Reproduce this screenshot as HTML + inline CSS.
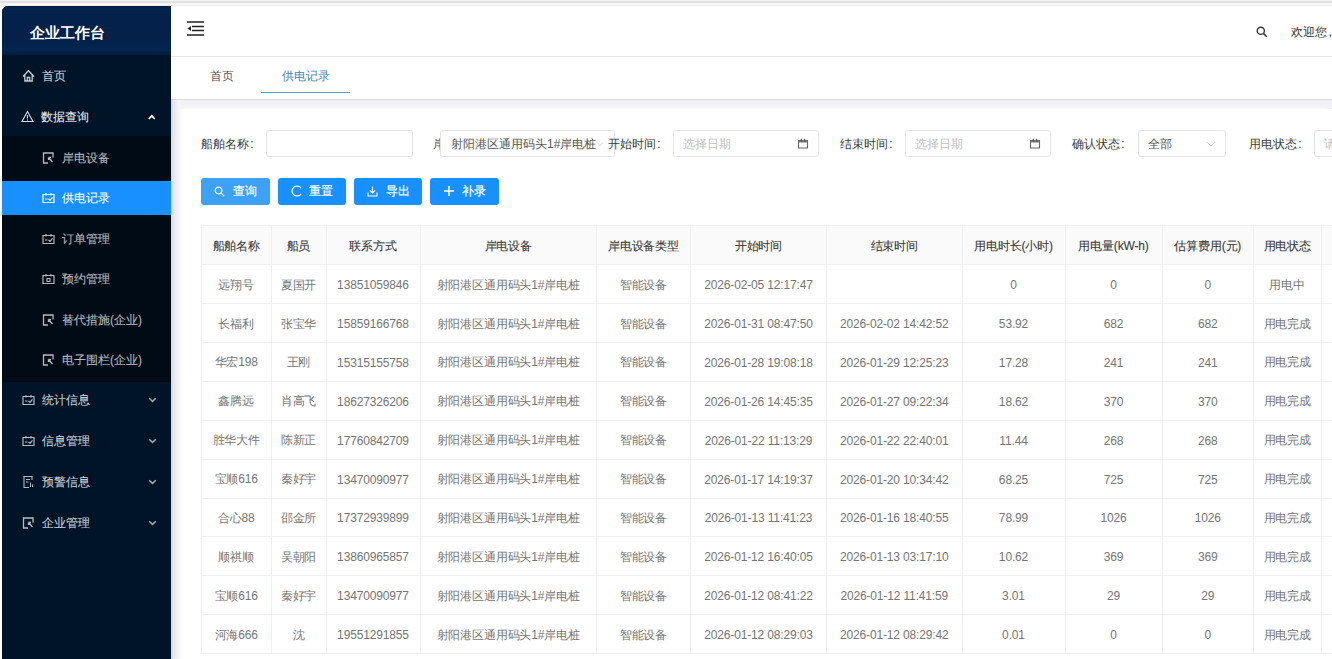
<!DOCTYPE html>
<html><head><meta charset="utf-8">
<style>
*{box-sizing:border-box;margin:0;padding:0}
html,body{width:1332px;height:659px;overflow:hidden;background:#fff;font-family:"Liberation Sans",sans-serif;font-size:12px;color:#333}
.abs{position:absolute}
#topstrip{left:0;top:0;width:1332px;height:6px;background:linear-gradient(#fafafa 0,#e2e2e2 1.5px,#e2e2e2 2.5px,#f7f7f7 3.5px,#f7f7f7 5px,#ededed 5.5px,#fff 6px)}
#side{left:2px;top:6px;width:169px;height:660px;background:#001428;border-top-left-radius:6px;overflow:hidden}
#logo{left:0;top:0;width:169px;height:49px;background:linear-gradient(#021b3a 0,#03244f 6%,#03214a 20%,#032149 70%,#042550 90%,#021c3c 100%);color:#fff;font-weight:bold;font-size:15px;line-height:18px;padding:18px 0 0 28px}
#sub{left:0;top:130px;width:169px;height:246px;background:#000b16}
.mi{position:absolute;left:0;width:169px;height:34px;line-height:34px;color:rgba(255,255,255,.75);font-size:12px;-webkit-text-stroke:0.1px currentColor}
.mi .ic{position:absolute;top:0;width:13px;height:34px}
.mi .tx{position:absolute;top:0}
.mi.act{background:#1890ff;color:#fff}
.chev{position:absolute;left:146px;top:0;width:9px;height:34px}
#hdr{left:171px;top:6px;width:1161px;height:51px;background:#fff;border-bottom:1px solid #e8e8e8}
#tabs{left:171px;top:57px;width:1161px;height:43px;background:#fff;border-bottom:1px solid #d8dadf}
#gray{left:171px;top:100px;width:1161px;height:559px;background:#f1f1f4}
#card{left:179px;top:109px;width:1153px;height:550px;background:#fff;box-shadow:-3px -2px 5px #fafafc}
.lbl{position:absolute;top:135px;height:18px;line-height:18px;color:#3a3a3a;white-space:nowrap}
.inp{position:absolute;top:130px;height:27px;border:1px solid #e4e4e6;border-radius:3px;background:#fff}
.ph{position:absolute;top:5px;line-height:16px;color:#bfbfbf;white-space:nowrap}
.btn{position:absolute;top:178px;height:27px;border-radius:3px;background:#1890ff;color:#fff}
.btn .t{position:absolute;top:0;line-height:27px;-webkit-text-stroke:0.2px currentColor}
table{position:absolute;left:201px;top:225px;width:1179px;border-collapse:collapse;table-layout:fixed}
td,th{padding-top:2px;border:1px solid #f0f0f0;letter-spacing:-0.15px;height:38.9px;text-align:center;font-weight:normal;color:#757575;white-space:nowrap;overflow:hidden}
th{background:#fafafa;color:#3c3c3c;height:39.2px;-webkit-text-stroke:0.12px currentColor}
</style></head><body>
<div id="topstrip" class="abs"></div>

<div id="side" class="abs">
  <div id="logo" class="abs">企业工作台</div>
  <div id="sub" class="abs"></div>
  <!-- items: centers 76,117,158,198,239,279.5,320,360,400.5,441,482,523 ; side top=6 -->
  <div class="mi" style="top:53px">
    <svg class="ic" style="left:20px" viewBox="0 0 13 34"><path d="M1 17.5 L6.5 11.8 L12 17.5 M2.8 16 V22 H10.2 V16 M5.3 22 V18.5 H7.7 V22" fill="none" stroke="rgba(255,255,255,.78)" stroke-width="1.3"/></svg>
    <span class="tx" style="left:40px">首页</span></div>
  <div class="mi" style="top:94px;color:rgba(255,255,255,.92)">
    <svg class="ic" style="left:19px" viewBox="0 0 13 34"><path d="M6.5 11.5 L12 21.5 H1 Z M6.5 15 V18.5 M6.5 19.6 V20.4" fill="none" stroke="rgba(255,255,255,.85)" stroke-width="1.1"/></svg>
    <span class="tx" style="left:39px">数据查询</span>
    <svg class="chev" viewBox="0 0 9 34"><path d="M0.8 19 L3.8 15.8 L6.8 19" fill="none" stroke="#fff" stroke-width="1.7"/></svg></div>
  <div class="mi" style="top:135px;color:rgba(255,255,255,.68)">
    <svg class="ic" style="left:40px" viewBox="0 0 13 34"><path d="M11 16.5 V12 H1.5 V22 H6 M6.5 16.5 L10.5 21 M6.5 16.5 H9 M6.5 16.5 V19" fill="none" stroke="rgba(255,255,255,.72)" stroke-width="1.3"/></svg>
    <span class="tx" style="left:60px">岸电设备</span></div>
  <div class="mi act" style="top:175px">
    <svg class="ic" style="left:40px" viewBox="0 0 13 34"><path d="M1 13.5 H12 V21.5 H1 Z M4 12 V14.5 M9 12 V14.5 M3 18 H5.5 M6.5 17.8 L8 19.3 L10.5 16.3" fill="none" stroke="#fff" stroke-width="1.2"/></svg>
    <span class="tx" style="left:60px">供电记录</span></div>
  <div class="mi" style="top:216px;color:rgba(255,255,255,.68)">
    <svg class="ic" style="left:40px" viewBox="0 0 13 34"><path d="M1 13.5 H12 V21.5 H1 Z M4 12 V14.5 M9 12 V14.5 M3 18 H5.5 M6.5 17.8 L8 19.3 L10.5 16.3" fill="none" stroke="rgba(255,255,255,.7)" stroke-width="1.2"/></svg>
    <span class="tx" style="left:60px">订单管理</span></div>
  <div class="mi" style="top:256px;color:rgba(255,255,255,.68)">
    <svg class="ic" style="left:40px" viewBox="0 0 13 34"><path d="M1 13.5 H12 V21.5 H1 Z M4 12 V14.5 M9 12 V14.5 M5 16.5 H8 V19.5 H5 Z" fill="none" stroke="rgba(255,255,255,.7)" stroke-width="1.2"/></svg>
    <span class="tx" style="left:60px">预约管理</span></div>
  <div class="mi" style="top:297px;color:rgba(255,255,255,.68)">
    <svg class="ic" style="left:40px" viewBox="0 0 13 34"><path d="M11 16.5 V12 H1.5 V22 H6 M6.5 16.5 L10.5 21 M6.5 16.5 H9 M6.5 16.5 V19" fill="none" stroke="rgba(255,255,255,.72)" stroke-width="1.3"/></svg>
    <span class="tx" style="left:60px">替代措施(企业)</span></div>
  <div class="mi" style="top:337px;color:rgba(255,255,255,.68)">
    <svg class="ic" style="left:40px" viewBox="0 0 13 34"><path d="M11 16.5 V12 H1.5 V22 H6 M6.5 16.5 L10.5 21 M6.5 16.5 H9 M6.5 16.5 V19" fill="none" stroke="rgba(255,255,255,.72)" stroke-width="1.3"/></svg>
    <span class="tx" style="left:60px">电子围栏(企业)</span></div>
  <div class="mi" style="top:377px">
    <svg class="ic" style="left:20px" viewBox="0 0 13 34"><path d="M1 13.5 H12 V21.5 H1 Z M4 12 V14.5 M9 12 V14.5 M3 18 H5.5 M6.5 17.8 L8 19.3 L10.5 16.3" fill="none" stroke="rgba(255,255,255,.7)" stroke-width="1.2"/></svg>
    <span class="tx" style="left:40px">统计信息</span>
    <svg class="chev" viewBox="0 0 9 34"><path d="M1.2 15.2 L4.5 18.4 L7.8 15.2" fill="none" stroke="rgba(255,255,255,.62)" stroke-width="1.6"/></svg></div>
  <div class="mi" style="top:418px">
    <svg class="ic" style="left:20px" viewBox="0 0 13 34"><path d="M1 13.5 H12 V21.5 H1 Z M4 12 V14.5 M9 12 V14.5 M3 18 H5.5 M6.5 17.8 L8 19.3 L10.5 16.3" fill="none" stroke="rgba(255,255,255,.7)" stroke-width="1.2"/></svg>
    <span class="tx" style="left:40px">信息管理</span>
    <svg class="chev" viewBox="0 0 9 34"><path d="M1.2 15.2 L4.5 18.4 L7.8 15.2" fill="none" stroke="rgba(255,255,255,.62)" stroke-width="1.6"/></svg></div>
  <div class="mi" style="top:459px">
    <svg class="ic" style="left:20px" viewBox="0 0 13 34"><path d="M10 15 V11.5 H2 V22.5 H7 M4 14.5 H8 M4 17 H6.5 M8.5 17.5 V22 M10.5 19.5 V22" fill="none" stroke="rgba(255,255,255,.7)" stroke-width="1.1"/></svg>
    <span class="tx" style="left:40px">预警信息</span>
    <svg class="chev" viewBox="0 0 9 34"><path d="M1.2 15.2 L4.5 18.4 L7.8 15.2" fill="none" stroke="rgba(255,255,255,.62)" stroke-width="1.6"/></svg></div>
  <div class="mi" style="top:500px">
    <svg class="ic" style="left:20px" viewBox="0 0 13 34"><path d="M11 16.5 V12 H1.5 V22 H6 M6.5 16.5 L10.5 21 M6.5 16.5 H9 M6.5 16.5 V19" fill="none" stroke="rgba(255,255,255,.72)" stroke-width="1.3"/></svg>
    <span class="tx" style="left:40px">企业管理</span>
    <svg class="chev" viewBox="0 0 9 34"><path d="M1.2 15.2 L4.5 18.4 L7.8 15.2" fill="none" stroke="rgba(255,255,255,.62)" stroke-width="1.6"/></svg></div>
</div>

<div id="hdr" class="abs">
  <svg class="abs" style="left:16px;top:15px" width="18" height="16" viewBox="0 0 18 16"><path d="M0 1 H17 M5 5.5 H17 M5 9.5 H17 M0 14 H17" stroke="#222" stroke-width="1.6"/><path d="M0.5 7.5 L4 5 V10 Z" fill="#222"/></svg>
  <svg class="abs" style="left:1085px;top:20px" width="12" height="12" viewBox="0 0 12 12"><circle cx="4.8" cy="4.8" r="3.6" fill="none" stroke="#333" stroke-width="1.4"/><path d="M7.5 7.5 L10.8 10.8" stroke="#333" stroke-width="1.6"/></svg>
  <span class="abs" style="left:1120px;top:17.5px;line-height:16px;color:#333;white-space:nowrap">欢迎您<span style="margin-left:1.5px">,</span></span>
</div>

<div id="tabs" class="abs">
  <span class="abs" style="left:39px;top:10.5px;line-height:16px;color:#5a5a5a">首页</span>
  <span class="abs" style="left:111px;top:10.5px;line-height:16px;color:#3f88b8">供电记录</span>
  <div class="abs" style="left:90px;top:34.5px;width:89px;height:1.5px;background:#5d9cc0"></div>
</div>

<div id="gray" class="abs"></div>
<div id="card" class="abs"></div>
<div class="abs" style="left:171px;top:100px;width:12px;height:559px;background:linear-gradient(90deg,#cfd3db 0,#e2e4ea 2px,#eeeff3 5px,#f6f6f9 8px,rgba(255,255,255,0) 12px)"></div>

<!-- filter row -->
<span class="lbl" style="left:201px">船舶名称<span style="margin-left:1.2px">:</span></span>
<div class="inp" style="left:266px;width:147px"></div>
<span class="lbl" style="left:433px;width:8px;overflow:hidden;color:#555">岸</span>
<div class="inp" style="left:440px;width:175px;overflow:hidden">
  <span class="ph" style="left:10px;color:#555">射阳港区通用码头1#岸电桩</span>
  <svg class="abs" style="left:155px;top:9px" width="8" height="8" viewBox="0 0 8 8"><path d="M1 2.5 L4 5.5 L7 2.5" fill="none" stroke="#ccc" stroke-width="1"/></svg>
</div>
<span class="lbl" style="left:608px">开始时间<span style="margin-left:1.2px">:</span></span>
<div class="inp" style="left:673px;width:146px">
  <span class="ph" style="left:9px">选择日期</span>
  <svg class="abs" style="left:123px;top:7px" width="12" height="12" viewBox="0 0 12 12"><path d="M1.5 2.5 H10.5 V10 H1.5 Z" fill="none" stroke="#666" stroke-width="1.1"/><rect x="1.5" y="2.5" width="9" height="2" fill="#777"/><path d="M4.3 0.8 V3.5 M7.7 0.8 V3.5" stroke="#555" stroke-width="1.2"/></svg>
</div>
<span class="lbl" style="left:840px">结束时间<span style="margin-left:1.2px">:</span></span>
<div class="inp" style="left:905px;width:146px">
  <span class="ph" style="left:9px">选择日期</span>
  <svg class="abs" style="left:123px;top:7px" width="12" height="12" viewBox="0 0 12 12"><path d="M1.5 2.5 H10.5 V10 H1.5 Z" fill="none" stroke="#666" stroke-width="1.1"/><rect x="1.5" y="2.5" width="9" height="2" fill="#777"/><path d="M4.3 0.8 V3.5 M7.7 0.8 V3.5" stroke="#555" stroke-width="1.2"/></svg>
</div>
<span class="lbl" style="left:1072px">确认状态<span style="margin-left:1.2px">:</span></span>
<div class="inp" style="left:1138px;width:88px">
  <span class="ph" style="left:9px;color:#555">全部</span>
  <svg class="abs" style="left:67px;top:9px" width="10" height="8" viewBox="0 0 10 8"><path d="M1 2 L5 6 L9 2" fill="none" stroke="#d5d5d5" stroke-width="1"/></svg>
</div>
<span class="lbl" style="left:1249px">用电状态<span style="margin-left:1.2px">:</span></span>
<div class="inp" style="left:1314px;width:40px">
  <span class="ph" style="left:9px">请</span>
</div>

<!-- buttons -->
<div class="btn" style="left:201px;width:69px;background:#3da1f7">
  <svg class="abs" style="left:13px;top:8px" width="11" height="11" viewBox="0 0 11 11"><circle cx="4.5" cy="4.5" r="3.3" fill="none" stroke="#fff" stroke-width="1.2"/><path d="M7 7 L10 10" stroke="#fff" stroke-width="1.3"/></svg>
  <span class="t" style="left:32px">查询</span></div>
<div class="btn" style="left:278px;width:68px">
  <svg class="abs" style="left:13px;top:7px" width="12" height="12" viewBox="0 0 12 12"><path d="M10.2 3.2 A5 5 0 1 0 10.2 8.8" fill="none" stroke="#fff" stroke-width="1.2"/></svg>
  <span class="t" style="left:31px">重置</span></div>
<div class="btn" style="left:354px;width:68px">
  <svg class="abs" style="left:13px;top:8px" width="11" height="11" viewBox="0 0 11 11"><path d="M5.5 0.5 V7 M3 4.5 L5.5 7 L8 4.5 M1 6.5 V10 H10 V6.5" fill="none" stroke="#fff" stroke-width="1.1"/></svg>
  <span class="t" style="left:32px">导出</span></div>
<div class="btn" style="left:430px;width:69px">
  <svg class="abs" style="left:14px;top:8px" width="10" height="10" viewBox="0 0 10 10"><path d="M5 0 V10 M0 5 H10" stroke="#fff" stroke-width="1.5"/></svg>
  <span class="t" style="left:32px">补录</span></div>

<table>
<colgroup><col style="width:69.5px"><col style="width:55px"><col style="width:94px"><col style="width:176.5px"><col style="width:94px"><col style="width:136px"><col style="width:135.5px"><col style="width:103px"><col style="width:97px"><col style="width:91.5px"><col style="width:67.5px"><col style="width:60px"></colgroup>
<tr><th>船舶名称</th><th>船员</th><th>联系方式</th><th>岸电设备</th><th>岸电设备类型</th><th>开始时间</th><th>结束时间</th><th>用电时长(小时)</th><th>用电量(kW-h)</th><th>估算费用(元)</th><th>用电状态</th><th></th></tr>
<tr><td>远翔号</td><td>夏国开</td><td>13851059846</td><td>射阳港区通用码头1#岸电桩</td><td>智能设备</td><td>2026-02-05 12:17:47</td><td></td><td>0</td><td>0</td><td>0</td><td>用电中</td><td></td></tr>
<tr><td>长福利</td><td>张宝华</td><td>15859166768</td><td>射阳港区通用码头1#岸电桩</td><td>智能设备</td><td>2026-01-31 08:47:50</td><td>2026-02-02 14:42:52</td><td>53.92</td><td>682</td><td>682</td><td>用电完成</td><td></td></tr>
<tr><td>华宏198</td><td>王刚</td><td>15315155758</td><td>射阳港区通用码头1#岸电桩</td><td>智能设备</td><td>2026-01-28 19:08:18</td><td>2026-01-29 12:25:23</td><td>17.28</td><td>241</td><td>241</td><td>用电完成</td><td></td></tr>
<tr><td>鑫腾远</td><td>肖高飞</td><td>18627326206</td><td>射阳港区通用码头1#岸电桩</td><td>智能设备</td><td>2026-01-26 14:45:35</td><td>2026-01-27 09:22:34</td><td>18.62</td><td>370</td><td>370</td><td>用电完成</td><td></td></tr>
<tr><td>胜华大件</td><td>陈新正</td><td>17760842709</td><td>射阳港区通用码头1#岸电桩</td><td>智能设备</td><td>2026-01-22 11:13:29</td><td>2026-01-22 22:40:01</td><td>11.44</td><td>268</td><td>268</td><td>用电完成</td><td></td></tr>
<tr><td>宝顺616</td><td>秦好宇</td><td>13470090977</td><td>射阳港区通用码头1#岸电桩</td><td>智能设备</td><td>2026-01-17 14:19:37</td><td>2026-01-20 10:34:42</td><td>68.25</td><td>725</td><td>725</td><td>用电完成</td><td></td></tr>
<tr><td>合心88</td><td>邵金所</td><td>17372939899</td><td>射阳港区通用码头1#岸电桩</td><td>智能设备</td><td>2026-01-13 11:41:23</td><td>2026-01-16 18:40:55</td><td>78.99</td><td>1026</td><td>1026</td><td>用电完成</td><td></td></tr>
<tr><td>顺祺顺</td><td>吴朝阳</td><td>13860965857</td><td>射阳港区通用码头1#岸电桩</td><td>智能设备</td><td>2026-01-12 16:40:05</td><td>2026-01-13 03:17:10</td><td>10.62</td><td>369</td><td>369</td><td>用电完成</td><td></td></tr>
<tr><td>宝顺616</td><td>秦好宇</td><td>13470090977</td><td>射阳港区通用码头1#岸电桩</td><td>智能设备</td><td>2026-01-12 08:41:22</td><td>2026-01-12 11:41:59</td><td>3.01</td><td>29</td><td>29</td><td>用电完成</td><td></td></tr>
<tr><td>河海666</td><td>沈</td><td>19551291855</td><td>射阳港区通用码头1#岸电桩</td><td>智能设备</td><td>2026-01-12 08:29:03</td><td>2026-01-12 08:29:42</td><td>0.01</td><td>0</td><td>0</td><td>用电完成</td><td></td></tr>
</table>
</body></html>
